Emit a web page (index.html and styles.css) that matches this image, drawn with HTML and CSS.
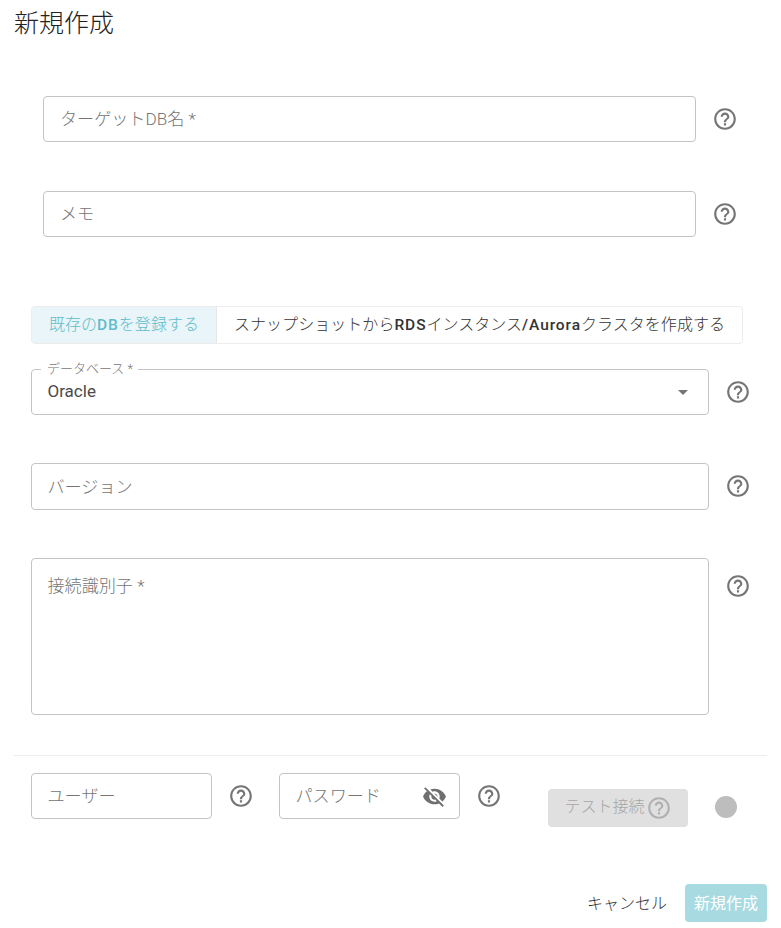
FILE: index.html
```html
<!DOCTYPE html>
<html lang="ja">
<head>
<meta charset="utf-8">
<title>新規作成</title>
<link rel="stylesheet" href="styles.css">
</head>
<body>
<svg class="defs" width="0" height="0" aria-hidden="true">
  <symbol id="help" viewBox="0 0 24 24"><path d="M11 18h2v-2h-2v2zm1-16C6.48 2 2 6.48 2 12s4.48 10 10 10 10-4.48 10-10S17.52 2 12 2zm0 18c-4.41 0-8-3.59-8-8s3.59-8 8-8 8 3.59 8 8-3.59 8-8 8zm0-14c-2.21 0-4 1.79-4 4h2c0-1.1.9-2 2-2s2 .9 2 2c0 2-3 1.75-3 5h2c0-2.25 3-2.5 3-5 0-2.21-1.79-4-4-4z"/></symbol>
</svg>
<main class="dialog">
  <h1 class="title">新規作成</h1>

  <section class="top-fields">
    <div class="row">
      <div class="field"><span class="placeholder">ターゲットDB名 *</span></div>
      <svg class="help"><use href="#help"/></svg>
    </div>
    <div class="row">
      <div class="field"><span class="placeholder">メモ</span></div>
      <svg class="help"><use href="#help"/></svg>
    </div>
  </section>

  <section class="main-fields">
    <div class="toggle">
      <div class="toggle-item active"><span>既存の<b class="latin">DB</b>を登録する</span></div>
      <div class="toggle-item"><span>スナップショットから<b class="latin">RDS</b>インスタンス<b class="latin">/Aurora</b>クラスタを作成する</span></div>
    </div>
    <div class="row row-select">
      <div class="field">
        <span class="legend">データベース *</span>
        <span class="value">Oracle</span>
        <span class="caret"></span>
      </div>
      <svg class="help"><use href="#help"/></svg>
    </div>
    <div class="row row-version">
      <div class="field"><span class="placeholder">バージョン</span></div>
      <svg class="help"><use href="#help"/></svg>
    </div>
    <div class="row row-area">
      <div class="field field-area"><span class="placeholder">接続識別子 *</span></div>
      <svg class="help"><use href="#help"/></svg>
    </div>
  </section>

  <hr class="divider">

  <section class="auth">
    <div class="field field-small"><span class="placeholder">ユーザー</span></div>
    <svg class="help help-auth"><use href="#help"/></svg>
    <div class="field field-small field-pass">
      <span class="placeholder">パスワード</span>
      <svg class="eye" viewBox="0 0 24 24"><path d="M12 7c2.76 0 5 2.24 5 5 0 .65-.13 1.26-.36 1.83l2.92 2.92c1.51-1.26 2.7-2.89 3.43-4.75-1.73-4.39-6-7.5-11-7.5-1.4 0-2.74.25-3.98.7l2.16 2.16C10.74 7.13 11.35 7 12 7zM2 4.27l2.28 2.28.46.46C3.08 8.3 1.78 10.02 1 12c1.73 4.39 6 7.5 11 7.5 1.55 0 3.03-.3 4.38-.84l.42.42L19.73 22 21 20.73 3.27 3 2 4.27zM7.53 9.8l1.55 1.55c-.05.21-.08.43-.08.65 0 1.66 1.34 3 3 3 .22 0 .44-.03.65-.08l1.55 1.55c-.67.33-1.41.53-2.2.53-2.76 0-5-2.24-5-5 0-.79.2-1.53.53-2.2zm4.31-.78l3.15 3.15.02-.16c0-1.66-1.34-3-3-3l-.17.01z"/></svg>
    </div>
    <svg class="help help-auth"><use href="#help"/></svg>
    <div class="test"><span>テスト接続</span><svg class="help help-test"><use href="#help"/></svg></div>
    <span class="status"></span>
  </section>

  <footer class="actions">
    <span class="cancel">キャンセル</span>
    <span class="create">新規作成</span>
  </footer>
</main>
</body>
</html>
```
FILE: styles.css
```css
* { box-sizing: border-box; }
html, body { margin: 0; padding: 0; background: #fff; }
body {
  font-family: Roboto, "Noto Sans CJK JP", sans-serif;
  font-weight: 300;
  color: #333;
}
.defs { position: absolute; }
.dialog { width: 781px; height: 928px; padding: 0 14px; overflow: hidden; }
.title {
  margin: 0;
  height: 47px;
  font-size: 25px;
  line-height: 47px;
  font-weight: 300;
  color: #222;
}
.top-fields {
  padding: 49px 0 0 29px;
  display: flex;
  flex-direction: column;
  gap: 49px;
}
.row { display: flex; align-items: center; }
.field {
  position: relative;
  flex: 0 0 653px;
  height: 46px;
  padding: 0 16px;
  border: 1px solid #c4c4c4;
  border-radius: 4px;
  display: flex;
  align-items: center;
  font-size: 17px;
}
.placeholder { color: #757575; font-size: 17.1px; padding-bottom: 3px; }
.help { width: 26px; height: 26px; fill: #757575; margin: 0 0 1px 16px; flex: none; }
.main-fields { padding: 69px 0 0 17px; }
.main-fields .field { padding-left: 15.5px; }
.toggle {
  display: flex;
  width: 712px;
  height: 38px;
  border: 1px solid #ececec;
  border-radius: 4px;
  font-size: 16px;
  letter-spacing: .05px;
  overflow: hidden;
}
.toggle-item {
  flex: auto;
  display: flex;
  align-items: center;
  justify-content: center;
  color: #333;
  padding-bottom: 4px;
}
.latin { font-weight: 500; font-size: 15.5px; letter-spacing: .9px; }
.toggle-item.active {
  flex: 0 0 185px;
  background: #e9f5f8;
  color: #5fbccb;
  border-right: 1px solid #e3e9eb;
}
.row-select { margin-top: 25px; }
.row-select .field, .row-version .field, .row-area .field { flex-basis: 678px; }
.legend {
  position: absolute;
  left: 9px;
  top: -9px;
  padding: 0 5px 0 6px;
  background: #fff;
  color: #757575;
  font-size: 13px;
  line-height: 16px;
}
.value { font-size: 17px; font-weight: 400; color: #4a4a4a; padding-bottom: 2px; }
.caret {
  position: absolute;
  right: 20px;
  top: 20px;
  border-left: 5px solid transparent;
  border-right: 5px solid transparent;
  border-top: 5px solid #757575;
}
.row-version { margin-top: 48px; }
.row-version .field { height: 47px; }
.row-area { margin-top: 48px; align-items: flex-start; }
.field-area { height: 157px; align-items: flex-start; padding-top: 13px; }
.field-area .placeholder { padding-bottom: 0; }
.row-area .help { margin-top: 15px; }
.divider { margin: 40px 0 0; border: 0; border-top: 1px solid #ececec; }
.auth { display: flex; align-items: flex-start; padding: 17px 0 0 17px; }
.auth .field-small { flex: 0 0 181px; padding-left: 15.5px; }
.field-pass { justify-content: space-between; padding-right: 12px; }
.help-auth { margin: 9.5px 25px 0 16px; }
.eye { width: 25px; height: 25px; fill: #6f6f6f; }
.test {
  display: flex;
  align-items: center;
  justify-content: center;
  width: 140px;
  height: 38px;
  margin: 16px 27px 0 21px;
  background: #e0e0e0;
  border-radius: 4px;
  color: #a6a6a6;
  font-size: 16px;
}
.test span { padding-bottom: 6px; }
.help-test { margin: 0 0 0 1px; fill: #b0b0b0; }
.status {
  width: 22px;
  height: 22px;
  margin-top: 23px;
  border-radius: 50%;
  background: #bdbdbd;
}
.actions {
  display: flex;
  justify-content: flex-end;
  align-items: center;
  gap: 18px;
  margin-top: 57px;
}
.cancel { font-size: 16px; color: #333; padding-bottom: 2px; }
.create {
  width: 82px;
  height: 38px;
  display: flex;
  align-items: center;
  justify-content: center;
  background: #a8dae2;
  border-radius: 4px;
  color: #fff;
  font-size: 16px;
  font-weight: 400;
  padding-bottom: 2px;
}
```
